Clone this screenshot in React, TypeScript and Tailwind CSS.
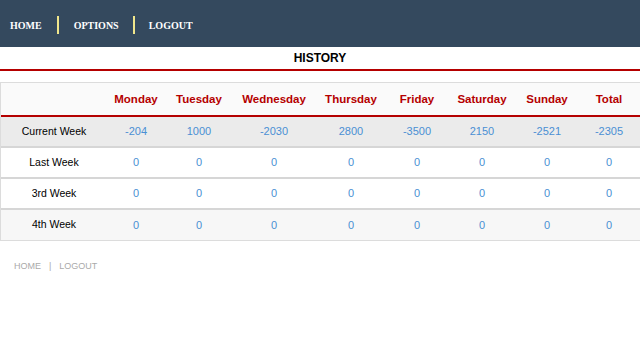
import React from 'react';

const days = ['Monday', 'Tuesday', 'Wednesday', 'Thursday', 'Friday', 'Saturday', 'Sunday', 'Total'];

const rows = [
  { label: 'Current Week', values: ['-204', '1000', '-2030', '2800', '-3500', '2150', '-2521', '-2305'], bg: 'bg-[#ebebeb]' },
  { label: 'Last Week', values: ['0', '0', '0', '0', '0', '0', '0', '0'], bg: 'bg-white' },
  { label: '3rd Week', values: ['0', '0', '0', '0', '0', '0', '0', '0'], bg: 'bg-white' },
  { label: '4th Week', values: ['0', '0', '0', '0', '0', '0', '0', '0'], bg: 'bg-[#f7f7f7]' },
];

const widths = ['w-[106px]', 'w-[58px]', 'w-[68px]', 'w-[82px]', 'w-[72px]', 'w-[60px]', 'w-[70px]', 'w-[60px]', 'w-[64px]'];

export default function App() {
  return (
    <div className="w-[640px] h-[360px] bg-white overflow-hidden font-['Liberation_Sans',Arial,sans-serif]">
      <nav className="h-[47px] bg-[#34495e] flex items-center pl-[10px] pt-[3px]">
        <a className="font-['Liberation_Serif',serif] font-bold text-[10px] text-white">HOME</a>
        <span className="mx-[15px] w-[2px] h-[18px] bg-[#f0e68c]" />
        <a className="font-['Liberation_Serif',serif] font-bold text-[10px] text-white">OPTIONS</a>
        <span className="mx-[14px] w-[2px] h-[18px] bg-[#f0e68c]" />
        <a className="font-['Liberation_Serif',serif] font-bold text-[10px] text-white">LOGOUT</a>
      </nav>

      <h1 className="h-[22px] flex items-center justify-center text-[12px] font-bold text-black">HISTORY</h1>
      <div className="h-[2px] bg-[#b50000]" />

      <div className="mt-[11px] border border-[#dcdcdc] border-r-2">
        <table className="w-full table-fixed border-collapse">
          <colgroup>
            {widths.map((w, i) => (
              <col key={i} className={w} />
            ))}
          </colgroup>
          <thead>
            <tr className="h-[33px] bg-[#fafafa] border-b-2 border-[#b50000]">
              <th />
              {days.map((d) => (
                <th key={d} className="text-[11.5px] font-bold text-[#b50000] text-center pt-[1px]">
                  {d}
                </th>
              ))}
            </tr>
          </thead>
          <tbody>
            {rows.map((r, ri) => (
              <tr key={r.label} className={`h-[31px] ${r.bg} ${ri < rows.length - 1 ? 'border-b-2 border-[#d6d6d6]' : ''}`}>
                <td className="text-[10.5px] text-black text-center">{r.label}</td>
                {r.values.map((v, i) => (
                  <td key={i} className="text-[11px] text-[#4a8fd4] text-center">
                    {v}
                  </td>
                ))}
              </tr>
            ))}
          </tbody>
        </table>
      </div>

      <div className="mt-[19px] pl-[14px] flex items-center text-[9px] text-[#aaaaaa]">
        <span>HOME</span>
        <span className="mx-[8px]">|</span>
        <span>LOGOUT</span>
      </div>
    </div>
  );
}
